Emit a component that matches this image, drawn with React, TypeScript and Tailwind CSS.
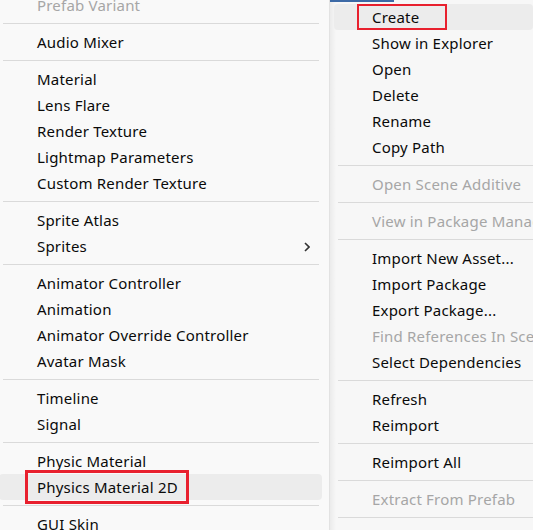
import React from "react";

type Item = { t: string; d?: boolean; sub?: boolean; hl?: boolean; box?: boolean } | "sep";

const left: Item[] = [
  { t: "Prefab Variant", d: true },
  "sep",
  { t: "Audio Mixer" },
  "sep",
  { t: "Material" },
  { t: "Lens Flare" },
  { t: "Render Texture" },
  { t: "Lightmap Parameters" },
  { t: "Custom Render Texture" },
  "sep",
  { t: "Sprite Atlas" },
  { t: "Sprites", sub: true },
  "sep",
  { t: "Animator Controller" },
  { t: "Animation" },
  { t: "Animator Override Controller" },
  { t: "Avatar Mask" },
  "sep",
  { t: "Timeline" },
  { t: "Signal" },
  "sep",
  { t: "Physic Material" },
  { t: "Physics Material 2D", hl: true, box: true },
  "sep",
  { t: "GUI Skin" },
];

const right: Item[] = [
  { t: "Create", hl: true, box: true },
  { t: "Show in Explorer" },
  { t: "Open" },
  { t: "Delete" },
  { t: "Rename" },
  { t: "Copy Path" },
  "sep",
  { t: "Open Scene Additive", d: true },
  "sep",
  { t: "View in Package Manager", d: true },
  "sep",
  { t: "Import New Asset..." },
  { t: "Import Package" },
  { t: "Export Package..." },
  { t: "Find References In Scene", d: true },
  { t: "Select Dependencies" },
  "sep",
  { t: "Refresh" },
  { t: "Reimport" },
  "sep",
  { t: "Reimport All" },
  "sep",
  { t: "Extract From Prefab", d: true },
  "sep",
];

function Row({ it, isLeft }: { it: Exclude<Item, "sep">; isLeft: boolean }) {
  return (
    <div
      className={`relative shrink-0 h-[26px] flex items-center ml-[4px] ${isLeft ? "mr-[7px]" : "mr-0"} rounded-[4px] ${
        it.hl ? "bg-[#ececec]" : ""
      }`}
    >
      <span
        className={`pl-[38px] whitespace-nowrap text-[15px] tracking-[0.2px] leading-[26px] ${
          it.d ? "text-[#a6a6a6]" : "text-[#0a0a0a]"
        }`}
      >
        {it.t}
      </span>
      {it.box && (
        <div
          className={`absolute border-[#e8202e] ${
            isLeft
              ? "border-[3px] left-[26px] w-[164px] top-[-4px] h-[34px]"
              : "border-[2.5px] left-[23px] w-[90px] top-0 h-[26px]"
          }`}
        />
      )}
      {it.sub && (
        <svg className="absolute left-[305px] top-[9px]" width="6" height="10" viewBox="0 0 6 10">
          <path d="M1 1 L5 5 L1 9" fill="none" stroke="#333" strokeWidth="1.6" />
        </svg>
      )}
    </div>
  );
}

function Sep({ isLeft }: { isLeft: boolean }) {
  return <div className={`shrink-0 h-px my-[5px] bg-[#dadada] ml-[8px] ${isLeft ? "mr-[10px]" : "mr-0"}`} />;
}

export default function App() {
  return (
    <div
      className="w-[533px] h-[530px] overflow-hidden flex bg-[#f9f9f9]"
      style={{ fontFamily: '"Noto Sans", "Open Sans", sans-serif' }}
    >
      <div className="w-[334px] ml-[-5px] shrink-0 flex flex-col mt-[-8px] bg-[#f9f9f9]">
        {left.map((it, i) => (it === "sep" ? <Sep key={i} isLeft /> : <Row key={i} it={it} isLeft />))}
      </div>
      <div className="w-px shrink-0 bg-[#e2e2e2]" />
      <div className="relative flex-1 overflow-hidden bg-[#f7f7f7]">
        <div className="absolute left-0 top-0 bottom-0 w-[6px] bg-gradient-to-r from-[#ebebeb] to-[#f7f7f7]" />
        <div className="absolute left-0 top-0 w-[64px] h-[2px] bg-[#3d6aa6]" />
        <div className="relative flex flex-col pt-[4px]">
          {right.map((it, i) => (it === "sep" ? <Sep key={i} isLeft={false} /> : <Row key={i} it={it} isLeft={false} />))}
        </div>
      </div>
    </div>
  );
}
